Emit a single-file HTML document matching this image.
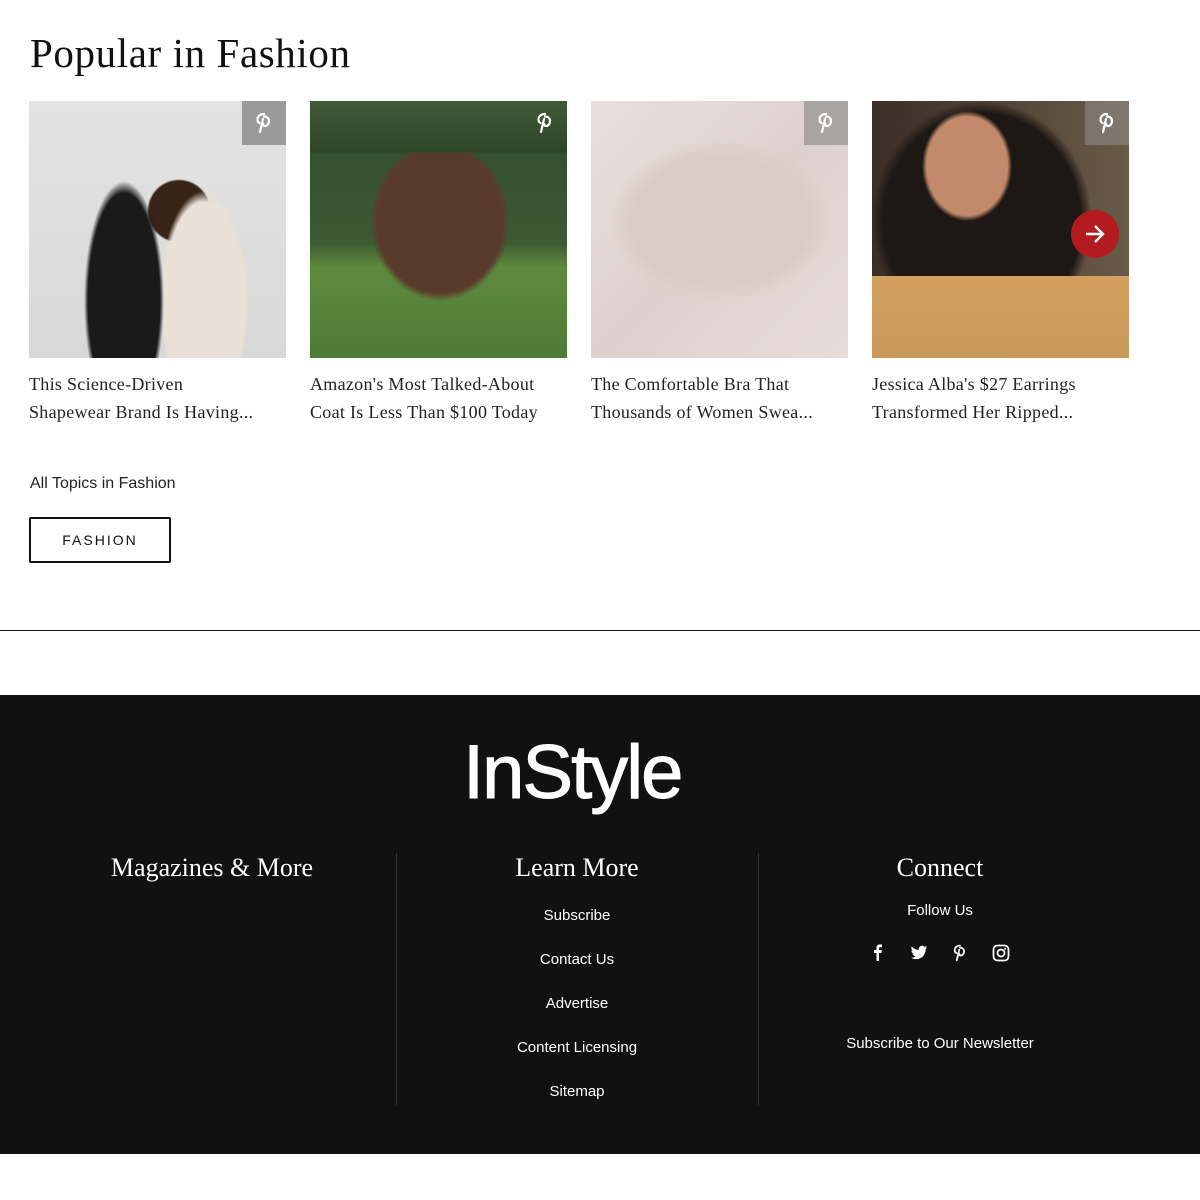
<!DOCTYPE html>
<html><head><meta charset="utf-8"><style>
*{margin:0;padding:0;box-sizing:border-box}
body{width:1200px;height:1200px;background:#fff;position:relative;font-family:"Liberation Sans",sans-serif;overflow:hidden}
.abs{position:absolute}
h1{position:absolute;left:30px;top:29px;font-family:"Liberation Serif",serif;font-weight:normal;font-size:41px;color:#111;letter-spacing:0.6px}
.img{position:absolute;top:101px;width:257px;height:257px}
.pin{position:absolute;right:0;top:0;width:44px;height:44px;display:flex;align-items:center;justify-content:center}
.cap{position:absolute;top:370px;width:262px;font-family:"Liberation Serif",serif;font-size:18px;line-height:28px;color:#222;letter-spacing:0.3px;white-space:nowrap}
.foot{position:absolute;left:0;top:695px;width:1200px;height:459px;background:#111}
.col{position:absolute;top:853px;text-align:center;color:#fff}
.col h3{font-family:"Liberation Serif",serif;font-weight:normal;font-size:26px;margin-top:0}
.link{position:absolute;left:0;width:100%;text-align:center;font-size:15px;color:#fff}
.div{position:absolute;top:853px;width:1px;height:252px;background:#333}
</style></head><body>
<h1>Popular in Fashion</h1>

<div class="img" style="left:29px;background:radial-gradient(ellipse 40px 120px at 95px 200px,#1a1a1a 90%,transparent 100%),radial-gradient(ellipse 45px 110px at 175px 200px,#e9e1d8 90%,transparent 100%),radial-gradient(circle at 150px 110px,#3a2418 30px,transparent 32px),linear-gradient(#e3e3e3,#d8d8d8)">
<div class="pin" style="background:#9a9a9a"><svg width="18" height="22" viewBox="0 0 18 22"><path d="M9 2C4.5 2 2.5 5 2.5 7.5c0 1.7.7 3 2 3.5M8 7L5 20M9 4.5c3 0 5 1.8 5 4.5 0 3-2 5-4 5-1.3 0-2-.8-1.8-2" stroke="#fff" stroke-width="2.2" fill="none" stroke-linecap="round"/></svg></div></div>

<div class="img" style="left:310px;background:linear-gradient(#3f5a38 0%,#2e4527 20%,transparent 20%),radial-gradient(ellipse 70px 80px at 130px 120px,#5a3b2b 90%,transparent 100%),linear-gradient(#2f4a2c 0%,#3c5a33 55%,#5f8a3e 65%,#4f7a36 100%)">
<div class="pin"><svg width="18" height="22" viewBox="0 0 18 22"><path d="M9 2C4.5 2 2.5 5 2.5 7.5c0 1.7.7 3 2 3.5M8 7L5 20M9 4.5c3 0 5 1.8 5 4.5 0 3-2 5-4 5-1.3 0-2-.8-1.8-2" stroke="#fff" stroke-width="2.2" fill="none" stroke-linecap="round"/></svg></div></div>

<div class="img" style="left:591px;background:radial-gradient(ellipse 110px 80px at 130px 120px,#d9ccc2 80%,transparent 100%),linear-gradient(135deg,#e8e0dc,#ddd1cd 50%,#e6dcd8)">
<div class="pin" style="background:#a8a4a2"><svg width="18" height="22" viewBox="0 0 18 22"><path d="M9 2C4.5 2 2.5 5 2.5 7.5c0 1.7.7 3 2 3.5M8 7L5 20M9 4.5c3 0 5 1.8 5 4.5 0 3-2 5-4 5-1.3 0-2-.8-1.8-2" stroke="#fff" stroke-width="2.2" fill="none" stroke-linecap="round"/></svg></div></div>

<div class="img" style="left:872px;background:linear-gradient(transparent 68%,#d4a060 68%,#c89858 100%),radial-gradient(ellipse 45px 55px at 95px 65px,#c28a6a 90%,transparent 100%),radial-gradient(ellipse 110px 120px at 110px 120px,#1e1815 90%,transparent 100%),linear-gradient(90deg,#3a2e26,#6a5a48)">
<div class="pin" style="background:rgba(150,150,150,.5)"><svg width="18" height="22" viewBox="0 0 18 22"><path d="M9 2C4.5 2 2.5 5 2.5 7.5c0 1.7.7 3 2 3.5M8 7L5 20M9 4.5c3 0 5 1.8 5 4.5 0 3-2 5-4 5-1.3 0-2-.8-1.8-2" stroke="#fff" stroke-width="2.2" fill="none" stroke-linecap="round"/></svg></div>
<div class="abs" style="left:199px;top:109px;width:48px;height:48px;border-radius:50%;background:#b31b20;display:flex;align-items:center;justify-content:center"><svg width="24" height="24" viewBox="0 0 24 24"><path d="M3 12h17M12 4l8 8-8 8" stroke="#fff" stroke-width="2.4" fill="none"/></svg></div></div>

<div class="cap" style="left:29px">This Science-Driven<br>Shapewear Brand Is Having...</div>
<div class="cap" style="left:310px">Amazon's Most Talked-About<br>Coat Is Less Than $100 Today</div>
<div class="cap" style="left:591px">The Comfortable Bra That<br>Thousands of Women Swea...</div>
<div class="cap" style="left:872px">Jessica Alba's $27 Earrings<br>Transformed Her Ripped...</div>

<div class="abs" style="left:30px;top:475px;font-size:16px;color:#222">All Topics in Fashion</div>
<div class="abs" style="left:29px;top:517px;width:142px;height:46px;border:2px solid #111;border-radius:2px;display:flex;align-items:center;justify-content:center;font-size:14px;letter-spacing:2px;color:#111">FASHION</div>

<div class="abs" style="left:0;top:630px;width:1200px;height:1px;background:#111"></div>

<div class="foot">
<div class="abs" style="left:463px;width:240px;top:38px;text-align:left;color:#fff;font-size:76px;letter-spacing:-2px;font-family:'Liberation Sans',sans-serif;line-height:80px;-webkit-text-stroke:1px #fff;white-space:nowrap">InStyle</div>
</div>
<div class="div" style="left:396px"></div>
<div class="div" style="left:758px"></div>

<div class="col" style="left:30px;width:364px"><h3>Magazines &amp; More</h3></div>
<div class="col" style="left:397px;width:360px;height:260px"><h3>Learn More</h3>
<div class="link" style="top:54px">Subscribe</div>
<div class="link" style="top:98px">Contact Us</div>
<div class="link" style="top:142px">Advertise</div>
<div class="link" style="top:186px">Content Licensing</div>
<div class="link" style="top:230px">Sitemap</div>
</div>
<div class="col" style="left:759px;width:362px;height:260px"><h3>Connect</h3>
<div class="link" style="top:49px">Follow Us</div>
<div class="abs" style="left:111px;top:91px;width:140px;display:flex;justify-content:space-between">
<svg width="16" height="18" viewBox="0 0 16 18"><path d="M9 17V9h2.5l.4-3H9V4.5c0-.8.3-1.3 1.4-1.3H12V.6C11.6.5 10.8.4 10 .4 8 .4 6.5 1.6 6.5 3.9V6H4v3h2.5v8z" fill="#fff"/></svg>
<svg width="18" height="18" viewBox="0 0 24 24"><path d="M23 4.5c-.8.4-1.7.6-2.6.7.9-.6 1.6-1.4 2-2.5-.9.5-1.9.9-2.9 1.1a4.5 4.5 0 0 0-7.700 4.100C7.900 7.700 4.600 5.900 2.400 3.200c-1.200 2.100-.5 4.700 1.400 6-.7 0-1.400-.2-2-.6 0 2.200 1.600 4.100 3.600 4.500-.7.200-1.400.200-2 .1.600 1.800 2.300 3.100 4.200 3.100A9 9 0 0 1 1 18.200 12.800 12.800 0 0 0 8 20.200c8.300 0 12.900-6.900 12.900-12.900v-.6c.9-.6 1.600-1.400 2.100-2.200z" fill="#fff"/></svg>
<svg width="16" height="18" viewBox="0 0 18 22"><path d="M9 2C4.5 2 2.5 5 2.5 7.5c0 1.7.7 3 2 3.5M8 7L5 20M9 4.5c3 0 5 1.8 5 4.5 0 3-2 5-4 5-1.3 0-2-.8-1.8-2" stroke="#fff" stroke-width="2.2" fill="none" stroke-linecap="round"/></svg>
<svg width="18" height="18" viewBox="0 0 18 18"><rect x="1.5" y="1.5" width="15" height="15" rx="4" stroke="#fff" stroke-width="1.8" fill="none"/><circle cx="9" cy="9" r="3.5" stroke="#fff" stroke-width="1.8" fill="none"/><circle cx="13.2" cy="4.8" r="1" fill="#fff"/></svg>
</div>
<div class="link" style="top:182px">Subscribe to Our Newsletter</div>
</div>
</body></html>
